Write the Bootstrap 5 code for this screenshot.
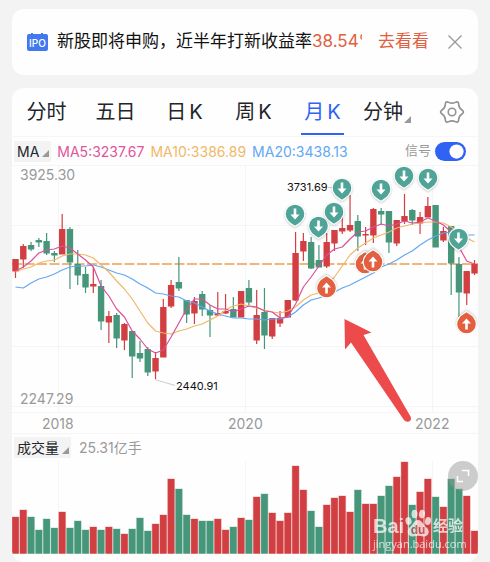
<!DOCTYPE html>
<html lang="zh-CN">
<head>
<meta charset="utf-8">
<meta name="viewport" content="width=device-width, initial-scale=1">
<title>月K</title>
<link href="https://cdn.jsdelivr.net/npm/bootstrap@5.3.0/dist/css/bootstrap.min.css" rel="stylesheet">
<style>
  body { background: #f3f3f3; color: #222; font-family: Inter, "Noto Sans CJK SC", sans-serif; }
  button { color: inherit; }
  .page { padding: 9px 12px 0; }
  .panel { background: #fefefe; border-radius: 12px; }
  .promo { height: 66px; margin-bottom: 13px; padding: 0 15px; font-size: 17px; }
  .promo-text { color: #111; margin-left: 8px; }
  .accent { color: #e2603f; }
  .promo-link { margin: 0 18px 0 16px; }
  .tabs { height: 49px; border-bottom: 1px solid #f6f6f6; padding: 0 13px 0 0; }
  .tab { flex: 69 1 0; height: 48px; font-size: 20px; line-height: 48px; }
  .tab.active { color: #2f63f3; }
  .tab.active::after { content: ""; position: absolute; left: 50%; bottom: 1px; width: 43px; height: 2px; margin-left: -22px; background: #2f63f3; }
  .tab-k { margin-left: 3px; }
  .tab-last { flex-grow: 52; }
  .settings { margin-left: 30px; }
  .corner { width: 0; height: 0; border-left: 7px solid transparent; border-bottom: 7px solid #999; }
  .tab-corner { position: absolute; right: -2px; bottom: 13px; }
  .ma-row { height: 28px; padding: 0 12px 0 2px; font-size: 14px; }
  .averages-text { gap: 6px; margin-left: 6px; }
  .pick { height: 21px; padding: 0 2px 0 3px; background: #f3f3f3; font-size: 14px; line-height: 21px; }
  .pick .corner { margin: 5px 0 0 3px; }
  .ma5 { color: #e0559b; } .ma10 { color: #f0b869; } .ma20 { color: #62a8f3; }
  .soft { color: #999; }
  .signal { font-size: 13px; }
  .form-switch .form-check-input { width: 31px; height: 19px; margin: 0; border: 0; }
  .form-check-input:checked { background-color: #2f63f3; }
  .chart { display: block; width: 100%; height: auto; }
  .vol-row { height: 27px; padding-left: 2px; font-size: 14px; }
  .volume { padding-bottom: 8px; }
  .expand { position: absolute; right: 0; top: 0; width: 30px; height: 30px; background: rgba(150,150,150,.48); }
  .brand { position: absolute; right: 15px; bottom: 11px; width: 90px; color: #fff; opacity: .72; }
  .brand-top { height: 28px; line-height: 22px; font-family: "Liberation Sans", "Noto Sans CJK SC", sans-serif; font-weight: 700; }
  .brand-bai { font-size: 20px; }
  .brand-name { font-size: 15px; }
  .brand-url { font: 11px/14px "Open Sans", sans-serif; }
</style>
<script src="https://cdn.jsdelivr.net/npm/bootstrap@5.3.0/dist/js/bootstrap.bundle.min.js"></script>
</head>
<body>
<main class="page">
  <section class="panel promo d-flex align-items-center">
    <svg class="flex-shrink-0" width="22" height="20" viewBox="0 0 22 20" aria-hidden="true">
      <path d="M5 1v4M15 1v4" stroke="#4279ee" stroke-width="2"/>
      <rect x="0" y="2" width="21" height="17" rx="2" fill="#4279ee"/>
      <text x="10.5" y="14.500" text-anchor="middle" font-size="10" font-weight="500" fill="#fff" font-family="Inter, sans-serif">IPO</text>
    </svg>
    <div class="promo-text flex-grow-1 overflow-hidden text-nowrap">新股即将申购，近半年打新收益率<span class="accent">38.54%</span></div>
    <a href="#" class="promo-link accent text-decoration-none text-nowrap">去看看</a>
    <button type="button" class="btn p-0 border-0 d-flex" aria-label="关闭">
      <svg width="16" height="16" viewBox="0 0 16 16"><path d="M1.500 1.500 14.500 14.500M14.500 1.500 1.500 14.500" stroke="#999" stroke-width="1.300"/></svg>
    </button>
  </section>

  <section class="panel overflow-hidden">
    <nav class="tabs d-flex align-items-center">
      <button type="button" class="tab btn p-0 border-0 rounded-0">分时</button>
      <button type="button" class="tab btn p-0 border-0 rounded-0">五日</button>
      <button type="button" class="tab btn p-0 border-0 rounded-0">日<span class="tab-k">K</span></button>
      <button type="button" class="tab btn p-0 border-0 rounded-0">周<span class="tab-k">K</span></button>
      <button type="button" class="tab active btn p-0 border-0 rounded-0 position-relative">月<span class="tab-k">K</span></button>
      <button type="button" class="tab tab-last btn p-0 border-0 rounded-0 position-relative">分钟<span class="corner tab-corner"></span></button>
      <button type="button" class="settings btn p-0 border-0 d-flex" aria-label="设置">
        <svg width="26" height="26" viewBox="-13 -13 26 26" fill="none" stroke="#929292" stroke-width="1.600">
          <path d="M9.950 2Q6.900 4 6.700 7.650Q6.500 11.300 3.250 9.650Q0 8-3.250 9.650Q-6.500 11.300-6.700 7.650Q-6.900 4-9.950 2Q-13 0-9.950-2Q-6.900-4-6.700-7.650Q-6.500-11.300-3.250-9.650Q0-8 3.250-9.650Q6.500-11.300 6.700-7.650Q6.900-4 9.950-2Q13 0 9.950 2Z"/>
          <circle r="3.800"/>
        </svg>
      </button>
    </nav>

    <div class="ma-row d-flex align-items-center text-nowrap">
      <button type="button" class="pick btn border-0 rounded-0 d-flex align-items-center">MA<span class="corner"></span></button>
      <div class="averages-text d-flex">
        <span class="ma5">MA5:3237.67</span>
        <span class="ma10">MA10:3386.89</span>
        <span class="ma20">MA20:3438.13</span>
      </div>
      <div class="form-check form-switch d-flex align-items-center ms-auto p-0 m-0">
        <label class="signal soft me-1" for="signal">信号</label>
        <input class="form-check-input" type="checkbox" role="switch" id="signal" checked>
      </div>
    </div>

    <svg id="price" class="chart" viewBox="12 165 466 269" role="img" aria-label="月K线">
      <g stroke="#f5f5f5" fill="none">
        <path d="M12 165.500H478M12 225.500H478M12 346.500H478M12 406.500H478M12 412.500H478M12 433.500H478M58.500 165V412M245.500 165V412M432.500 165V412"/>
      </g>
      <g fill="#999" font-size="14">
        <text x="20" y="180">3925.30</text><text x="20" y="404">2247.29</text>
        <text x="42" y="429">2018</text><text x="228" y="429">2020</text><text x="415" y="429">2022</text>
      </g>
      <path d="M12 264H478" stroke="#eba04f" stroke-width="1.500" stroke-dasharray="10 2.500"/>
      <g id="candles"></g>
      <g id="averages" fill="none" stroke-width="1.200" stroke-linejoin="round"></g>
      <path d="M155 379.500 175 385.500M328 187.500H333" stroke="#ccc"/>
      <g fill="#111" font-size="11"><text x="176" y="390">2440.91</text><text x="287" y="191">3731.69</text></g>
      <g id="signals"></g>
      <path d="M344.500 319 371.500 332.500 363.500 335 410.500 416.500Q412 420 409 421.500Q406 422.500 404 420L351 342.500 345 349.500Z" fill="#ec4a4b"/>
    </svg>

    <div class="vol-row d-flex align-items-center">
      <button type="button" class="pick btn border-0 rounded-0 d-flex align-items-center">成交量<span class="corner"></span></button>
      <span class="soft ms-2">25.31亿手</span>
    </div>

    <div class="volume position-relative">
      <svg id="volume" class="chart" viewBox="12 461 466 93" role="img" aria-label="成交量">
        <path d="M58.500 461V554M245.500 461V554M432.500 461V554" stroke="#f5f5f5"/>
      </svg>
      <div class="brand">
        <div class="brand-top d-flex align-items-end justify-content-between text-nowrap">
          <span class="brand-bai">Bai</span>
          <svg class="flex-shrink-0" width="27" height="28" viewBox="0 0 27 28" fill="#fff" aria-hidden="true">
            <ellipse cx="3.500" cy="12" rx="3" ry="4" transform="rotate(-15 3.500 12)"/>
            <ellipse cx="9.500" cy="5" rx="3" ry="4.300"/>
            <ellipse cx="17" cy="5" rx="3" ry="4.300" transform="rotate(8 17 5)"/>
            <ellipse cx="23" cy="12" rx="3" ry="4" transform="rotate(12 23 12)"/>
            <path d="M13 11C9 11 8 16 4.500 18.500C1 22 3 28 8 27.500C12 26.500 15 26.500 18 27.500C24 28 25.500 22 21.500 18.500C18 16 17 11 13 11Z"/>
            <text x="13" y="25" text-anchor="middle" font-size="12" fill="#b5504f">du</text>
          </svg>
          <span class="brand-name">经验</span>
        </div>
        <div class="brand-url text-nowrap">jingyan.baidu.com</div>
      </div>
      <button type="button" class="expand btn p-0 border-0 rounded-circle d-flex align-items-center justify-content-center" aria-label="全屏">
        <svg width="14" height="14" viewBox="0 0 14 14" fill="none" stroke="#fff" stroke-width="1.500"><path d="M6 1.500H12.500V7M1.500 7V12.500H7"/></svg>
      </button>
    </div>
  </section>
</main>
<script>
const RED = '#d23f42', GREEN = '#46967a';
const xAt = i => 15.5 + i * 7.78;
// colour, body top, body bottom, wick top, wick bottom, volume top
const months = `r 259 271 259 278 517|r 246 259 244 268 510|g 245 249 242 251 517|g 240 242 238 247 530|g 241 253 233 255 519|g 253 255 251 262 528|r 229 254 214 254 512|g 229 262 227 289 528|g 264 275 250 285 521|g 274 287 267 293 530|r 284 286 267 293 527|g 286 321 280 330 530|r 316 322 311 343 527|g 315 338 313 348 529|r 324 340 323 350 534|g 331 356 331 378 529|g 353 358 341 362 518|g 349 372 347 376 531|r 358 371 352 379 524|r 307 357 299 357 515|r 285 306 280 308 479|g 282 288 257 291 489|g 300 314 300 323 515|r 301 313 297 324 519|g 294 309 291 316 521|g 310 315 305 337 521|r 313 315 292 316 519|r 311 313 294 314 530|g 309 317 297 317 527|r 291 317 291 317 518|g 288 302 280 305 520|r 315 340 290 344 497|g 312 335 288 349 494|r 318 336 318 339 513|r 318 323 311 327 521|r 300 317 300 317 513|r 253 300 232 301 466|r 241 251 233 261 490|g 242 268 237 269 511|g 260 267 245 267 527|r 242 266 233 268 505|r 230 243 230 251 498|r 228 231 217 234 496|r 225 230 195 232 512|g 221 236 215 251 490|r 234 235 227 245 504|r 209 235 208 243 504|g 211 214 208 225 496|g 211 242 211 253 486|r 220 243 220 246 477|r 216 221 194 224 462|g 210 220 209 225 505|r 217 223 212 234 492|r 206 217 197 217 479|g 205 247 205 247 497|r 231 240 227 242 507|g 226 263 226 295 479|g 264 292 257 317 489|r 271 293 271 305 496|r 264 273 260 275 531`
  .split('|').map(s => { const [c, ...n] = s.split(' '); return [c === 'r' ? RED : GREEN, ...n.map(Number)]; });
let candles = '', bars = '';
months.forEach(([c, top, bottom, high, low, vol], i) => {
  const x = xAt(i);
  candles += `<g fill="${c}"><rect x="${x - .6}" y="${high}" width="1.200" height="${low - high}"/><rect x="${x - 3.2}" y="${top}" width="6.400" height="${bottom - top + .5}" rx=".5"/></g>`;
  bars += `<rect x="${x - 3.9}" y="${vol - .5}" width="7.780" height="${554 - vol}" fill="${c}" opacity=".35"/><rect x="${x - 3.3}" y="${vol}" width="6.600" height="${553.7 - vol}" fill="${c}"/>`;
});
document.getElementById('candles').innerHTML = candles;
document.getElementById('volume').insertAdjacentHTML('beforeend', bars);

const averages = {
  '#62a8f3': [287,288,283,279,277,274,270,267,266,266,265,267,270,273,275,279,284,288,293,294,296,297,301,303,307,311,314,316,318,318,319,319,320,319,319,317,312,305,300,298,295,292,288,285,281,277,273,267,264,260,255,251,245,240,236,233,232,233,235,235],
  '#f0b869': [272,269,267,263,261,260,256,254,254,255,258,265,272,281,289,299,311,323,331,333,334,331,329,326,324,320,316,310,306,304,306,308,310,312,313,311,307,300,295,293,286,277,266,255,248,243,238,235,232,228,226,224,223,222,222,223,227,232,238,242],
  '#dc5099': [271,267,261,253,250,249,246,248,254,260,267,286,296,309,317,331,339,349,353,350,337,323,309,299,299,305,309,309,312,309,306,307,311,312,318,317,304,287,277,266,255,249,247,239,232,231,227,224,226,224,221,223,222,218,221,225,232,247,261,264]
};
document.getElementById('averages').innerHTML = Object.entries(averages).map(([c, ys]) =>
  `<polyline stroke="${c}" points="${ys.map((y, i) => xAt(i) + ',' + y).join(' ')}"/>`).join('');

// sell markers point down, buy markers point up
const signals = [[295,214,0],[318.5,226,0],[334,212,0],[342,188,0],[381,189,0],[404,176,0],[428,178,0],[458.5,238,0],[326.5,288,1],[365,264,1],[373,262,1],[466.5,324,1]];
document.getElementById('signals').innerHTML = signals.map(([x, y, up]) =>
  `<g transform="translate(${x} ${y}) rotate(${up ? 180 : 0})"><path d="M0 12.500C-3 10-6 9-7.500 6.500A9.900 9.900 0 1 1 7.500 6.500C6 9 3 10 0 12.500Z" fill="${up ? '#e2603f' : '#4fa497'}" stroke="#fff" stroke-width="1.200" style="filter:drop-shadow(0 1px 1px #0003)"/><path d="M-1.300-5.500H1.300V.5H4.500L0 5.500-4.500.5H-1.300Z" fill="#fff"/></g>`).join('');
</script>
</body>
</html>
